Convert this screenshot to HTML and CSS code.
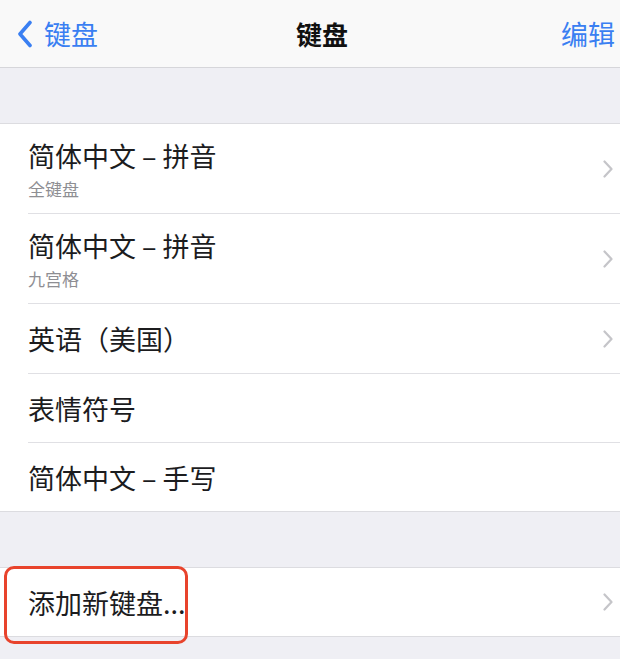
FILE: index.html
```html
<!DOCTYPE html>
<html lang="zh-CN">
<head>
  <meta charset="UTF-8" />
  <meta name="viewport" content="width=device-width, initial-scale=1.0"/>
  <title>键盘</title>
  <link rel="stylesheet" href="styles.css">
</head>
<body>
  <header class="nav">
    <a class="nav-back" href="#">
      <svg class="back-icon" width="16" height="28" viewBox="0 0 16 28">
        <path d="M13 2.5 L3 14 L13 25.5" fill="none" stroke="#3a7ff2" stroke-width="3.6" stroke-linecap="round" stroke-linejoin="round"/>
      </svg>
      <span>键盘</span>
    </a>
    <h1 class="nav-title">键盘</h1>
    <a class="nav-edit" href="#">编辑</a>
  </header>

  <div class="gap"></div>

  <ul class="group">
    <li class="row row-tall">
      <div class="row-inner">
        <div class="row-text">
          <span class="row-title">简体中文 – 拼音</span>
          <span class="row-sub">全键盘</span>
        </div>
        <svg class="chevron" width="10" height="18" viewBox="0 0 10 18"><path d="M1.5 1.5 L8.5 9 L1.5 16.5" fill="none" stroke="#c5c5c9" stroke-width="2.2" stroke-linecap="round" stroke-linejoin="round"/></svg>
      </div>
    </li>
    <li class="row row-tall">
      <div class="row-inner">
        <div class="row-text">
          <span class="row-title">简体中文 – 拼音</span>
          <span class="row-sub">九宫格</span>
        </div>
        <svg class="chevron" width="10" height="18" viewBox="0 0 10 18"><path d="M1.5 1.5 L8.5 9 L1.5 16.5" fill="none" stroke="#c5c5c9" stroke-width="2.2" stroke-linecap="round" stroke-linejoin="round"/></svg>
      </div>
    </li>
    <li class="row">
      <div class="row-inner">
        <span class="row-title">英语（美国）</span>
        <svg class="chevron" width="10" height="18" viewBox="0 0 10 18"><path d="M1.5 1.5 L8.5 9 L1.5 16.5" fill="none" stroke="#c5c5c9" stroke-width="2.2" stroke-linecap="round" stroke-linejoin="round"/></svg>
      </div>
    </li>
    <li class="row">
      <div class="row-inner">
        <span class="row-title">表情符号</span>
      </div>
    </li>
    <li class="row">
      <div class="row-inner">
        <span class="row-title">简体中文 – 手写</span>
      </div>
    </li>
  </ul>

  <div class="gap"></div>

  <div class="group-wrap">
    <ul class="group">
      <li class="row">
        <div class="row-inner">
          <span class="row-title">添加新键盘...</span>
          <svg class="chevron" width="10" height="18" viewBox="0 0 10 18"><path d="M1.5 1.5 L8.5 9 L1.5 16.5" fill="none" stroke="#c5c5c9" stroke-width="2.2" stroke-linecap="round" stroke-linejoin="round"/></svg>
        </div>
      </li>
    </ul>
    <div class="mark"></div>
  </div>

  <div class="gap-bottom"></div>
</body>
</html>
```

FILE: styles.css
```css
body {
  margin: 0;
  background: #efeff4;
  font-family: "Noto Sans CJK SC", "Noto Sans", sans-serif;
  color: #1c1c1e;
}

.nav {
  display: flex;
  align-items: center;
  height: 67px;
  padding: 0 5px 0 17px;
  background: #f9f9f9;
  border-bottom: 1px solid #d6d6da;
}

.nav a {
  color: #3a7ff2;
  text-decoration: none;
  font-size: 27px;
}

.nav-back {
  flex: 1;
  display: flex;
  align-items: center;
  gap: 11px;
}

.back-icon {
  display: block;
  margin-top: 1px;
}

.nav-title {
  margin: 0;
  font-size: 26px;
  font-weight: bold;
  color: #111;
  padding-left: 12px;
}

.nav-edit {
  flex: 1;
  text-align: right;
}

.gap {
  height: 55px;
}

.gap-bottom {
  height: 21px;
}

.group {
  list-style: none;
  margin: 0;
  padding: 0;
  background: #fff;
  border-top: 1px solid #dcdce0;
  border-bottom: 1px solid #dcdce0;
}

.row {
  padding-left: 28px;
}

.row-inner {
  display: flex;
  align-items: center;
  justify-content: space-between;
  height: 68px;
  padding-right: 7px;
  border-bottom: 1px solid #e0e0e4;
}

.row:nth-child(3) .row-inner {
  height: 69px;
}

.row-tall .row-inner {
  height: 89px;
}

.row:last-child .row-inner {
  border-bottom: none;
}

.row-text {
  display: flex;
  flex-direction: column;
}

.row-title {
  font-size: 27px;
  line-height: 39px;
}

.row-sub {
  margin-top: 1px;
  font-size: 17px;
  line-height: 25px;
  color: #8e8e93;
}

.chevron {
  display: block;
  flex-shrink: 0;
}

.group-wrap {
  position: relative;
}

/* red annotation box */
.mark {
  position: absolute;
  z-index: 1;
  left: 4px;
  top: -1px;
  width: 178px;
  height: 72px;
  border: 3px solid #e8432c;
  border-radius: 10px;
}
```
